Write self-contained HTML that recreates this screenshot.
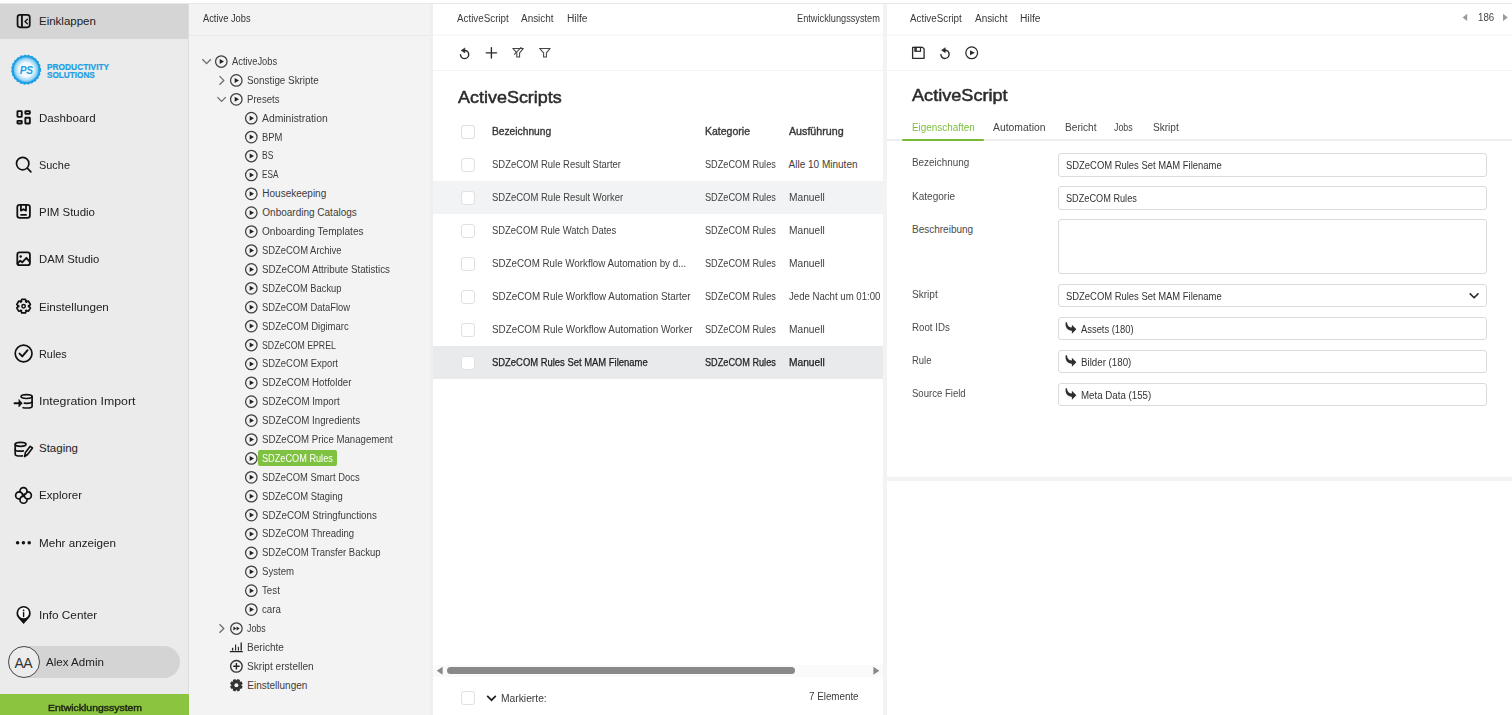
<!DOCTYPE html>
<html><head><meta charset="utf-8"><title>ActiveScripts</title>
<style>
html,body{margin:0;padding:0;width:1512px;height:715px;overflow:hidden;background:#fff;}
body{position:relative;font-family:"Liberation Sans", sans-serif;}
.t{position:absolute;white-space:nowrap;}
.b{position:absolute;}
.ov{position:absolute;left:0;top:0;}
</style></head><body>
<div class="b" style="left:0px;top:0px;width:1512px;height:3px;background:#fff"></div>
<div class="b" style="left:0px;top:3px;width:1512px;height:1px;background:#e8e8e8"></div>
<div class="b" style="left:0px;top:4px;width:189px;height:711px;background:#ebebeb"></div>
<div class="b" style="left:188px;top:4px;width:1px;height:711px;background:#dcdde0"></div>
<div class="b" style="left:0px;top:4px;width:188px;height:35px;background:#d5d5d5"></div>
<div class="b" style="left:189px;top:4px;width:244px;height:711px;background:#f3f3f3"></div>
<div class="b" style="left:430px;top:4px;width:3px;height:711px;background:#efefef"></div>
<div class="b" style="left:189px;top:35px;width:241px;height:1px;background:#e9eaec"></div>
<div class="b" style="left:433px;top:4px;width:450px;height:711px;background:#fff"></div>
<div class="b" style="left:433px;top:34px;width:450px;height:2px;background:#f8f9f9"></div>
<div class="b" style="left:433px;top:70px;width:450px;height:1px;background:#f3f4f6"></div>
<div class="b" style="left:883px;top:4px;width:4px;height:711px;background:#f3f3f3"></div>
<div class="b" style="left:887px;top:4px;width:625px;height:711px;background:#fff"></div>
<div class="b" style="left:887px;top:34px;width:625px;height:2px;background:#f8f9f9"></div>
<div class="b" style="left:887px;top:70px;width:625px;height:1px;background:#f3f4f6"></div>
<div class="b" style="left:887px;top:477px;width:625px;height:4px;background:#f2f2f2"></div>
<div class="t" style="left:39px;top:16px;font-size:11.5px;line-height:11.5px;color:#222;font-weight:400;">Einklappen</div>
<div class="t" style="left:46.5px;top:62px;font-size:10px;line-height:10px;color:#1e9fe3;font-weight:700;transform:translateY(0.2px) scale(0.835,0.94);transform-origin:0 8px;-webkit-text-stroke:0.25px #1e9fe3;">PRODUCTIVITY</div>
<div class="t" style="left:46.5px;top:70px;font-size:10px;line-height:10px;color:#1e9fe3;font-weight:700;transform:translateY(0.2px) scale(0.82,0.94);transform-origin:0 8px;-webkit-text-stroke:0.25px #1e9fe3;">SOLUTIONS</div>
<div class="t" style="left:39px;top:113px;font-size:11.5px;line-height:11.5px;color:#222;font-weight:400;transform:scale(1.0064,1.0);transform-origin:0 9px;">Dashboard</div>
<div class="t" style="left:39px;top:160px;font-size:11.5px;line-height:11.5px;color:#222;font-weight:400;transform:scale(0.9492,1.0);transform-origin:0 9px;">Suche</div>
<div class="t" style="left:39px;top:207px;font-size:11.5px;line-height:11.5px;color:#222;font-weight:400;transform:scale(0.9950,1.0);transform-origin:0 9px;">PIM Studio</div>
<div class="t" style="left:39px;top:254px;font-size:11.5px;line-height:11.5px;color:#222;font-weight:400;transform:scale(0.9845,1.0);transform-origin:0 9px;">DAM Studio</div>
<div class="t" style="left:39px;top:302px;font-size:11.5px;line-height:11.5px;color:#222;font-weight:400;transform:scale(1.0113,1.0);transform-origin:0 9px;">Einstellungen</div>
<div class="t" style="left:39px;top:349px;font-size:11.5px;line-height:11.5px;color:#222;font-weight:400;transform:scale(0.9453,1.0);transform-origin:0 9px;">Rules</div>
<div class="t" style="left:39px;top:396px;font-size:11.5px;line-height:11.5px;color:#222;font-weight:400;transform:scale(1.0704,1.0);transform-origin:0 9px;">Integration Import</div>
<div class="t" style="left:39px;top:443px;font-size:11.5px;line-height:11.5px;color:#222;font-weight:400;">Staging</div>
<div class="t" style="left:39px;top:490px;font-size:11.5px;line-height:11.5px;color:#222;font-weight:400;transform:scale(1.0047,1.0);transform-origin:0 9px;">Explorer</div>
<div class="t" style="left:39px;top:538px;font-size:11.5px;line-height:11.5px;color:#222;font-weight:400;transform:scale(1.0107,1.0);transform-origin:0 9px;">Mehr anzeigen</div>
<div class="t" style="left:39px;top:610px;font-size:11.5px;line-height:11.5px;color:#222;font-weight:400;transform:scale(1.0222,1.0);transform-origin:0 9px;">Info Center</div>
<div class="b" style="left:8px;top:646px;width:172px;height:32px;background:#d4d4d4;border-radius:16px"></div>
<div class="b" style="left:8px;top:646px;width:32px;height:32px;box-sizing:border-box;border:1px solid #4a4a4a;border-radius:50%;background:#ececec"></div>
<div class="t" style="left:7.3px;top:656px;font-size:14px;line-height:14px;color:#333;font-weight:400;width:32px;text-align:center;letter-spacing:-0.5px;">AA</div>
<div class="t" style="left:45.5px;top:657px;font-size:11.5px;line-height:11.5px;color:#222;font-weight:400;transform:scale(1.0068,1.0);transform-origin:0 9px;">Alex Admin</div>
<div class="b" style="left:0px;top:694px;width:189px;height:21px;background:#8bc540"></div>
<div class="t" style="left:47.5px;top:703px;font-size:9.5px;line-height:9.5px;color:#222a14;font-weight:400;-webkit-text-stroke:0.45px #222a14;transform:scale(1.0999,1.0);transform-origin:0 8px;">Entwicklungssystem</div>
<div class="t" style="left:203px;top:14px;font-size:10px;line-height:10px;color:#333;font-weight:400;transform:scale(0.9306,1.0);transform-origin:0 8px;">Active Jobs</div>
<div class="t" style="left:232.3px;top:57px;font-size:10px;line-height:10px;color:#3c3c3c;font-weight:400;transform:scale(0.9334,1.0);transform-origin:0 8px;">ActiveJobs</div>
<div class="t" style="left:247.3px;top:76px;font-size:10px;line-height:10px;color:#3c3c3c;font-weight:400;transform:scale(0.9854,1.0);transform-origin:0 8px;">Sonstige Skripte</div>
<div class="t" style="left:247.3px;top:95px;font-size:10px;line-height:10px;color:#3c3c3c;font-weight:400;transform:scale(0.9590,1.0);transform-origin:0 8px;">Presets</div>
<div class="t" style="left:262.3px;top:114px;font-size:10px;line-height:10px;color:#3c3c3c;font-weight:400;transform:scale(1.0367,1.0);transform-origin:0 8px;">Administration</div>
<div class="t" style="left:262.3px;top:133px;font-size:10px;line-height:10px;color:#3c3c3c;font-weight:400;transform:scale(0.9416,1.0);transform-origin:0 8px;">BPM</div>
<div class="t" style="left:262.3px;top:151px;font-size:10px;line-height:10px;color:#3c3c3c;font-weight:400;transform:scale(0.8489,1.0);transform-origin:0 8px;">BS</div>
<div class="t" style="left:262.3px;top:170px;font-size:10px;line-height:10px;color:#3c3c3c;font-weight:400;transform:scale(0.8228,1.0);transform-origin:0 8px;">ESA</div>
<div class="t" style="left:262.3px;top:189px;font-size:10px;line-height:10px;color:#3c3c3c;font-weight:400;">Housekeeping</div>
<div class="t" style="left:262.3px;top:208px;font-size:10px;line-height:10px;color:#3c3c3c;font-weight:400;">Onboarding Catalogs</div>
<div class="t" style="left:262.3px;top:227px;font-size:10px;line-height:10px;color:#3c3c3c;font-weight:400;transform:scale(1.0114,1.0);transform-origin:0 8px;">Onboarding Templates</div>
<div class="t" style="left:262.3px;top:246px;font-size:10px;line-height:10px;color:#3c3c3c;font-weight:400;transform:scale(0.9414,1.0);transform-origin:0 8px;">SDZeCOM Archive</div>
<div class="t" style="left:262.3px;top:265px;font-size:10px;line-height:10px;color:#3c3c3c;font-weight:400;transform:scale(0.9759,1.0);transform-origin:0 8px;">SDZeCOM Attribute Statistics</div>
<div class="t" style="left:262.3px;top:284px;font-size:10px;line-height:10px;color:#3c3c3c;font-weight:400;transform:scale(0.9350,1.0);transform-origin:0 8px;">SDZeCOM Backup</div>
<div class="t" style="left:262.3px;top:303px;font-size:10px;line-height:10px;color:#3c3c3c;font-weight:400;transform:scale(0.9373,1.0);transform-origin:0 8px;">SDZeCOM DataFlow</div>
<div class="t" style="left:262.3px;top:322px;font-size:10px;line-height:10px;color:#3c3c3c;font-weight:400;transform:scale(0.9523,1.0);transform-origin:0 8px;">SDZeCOM Digimarc</div>
<div class="t" style="left:262.3px;top:341px;font-size:10px;line-height:10px;color:#3c3c3c;font-weight:400;transform:scale(0.8748,1.0);transform-origin:0 8px;">SDZeCOM EPREL</div>
<div class="t" style="left:262.3px;top:359px;font-size:10px;line-height:10px;color:#3c3c3c;font-weight:400;transform:scale(0.9422,1.0);transform-origin:0 8px;">SDZeCOM Export</div>
<div class="t" style="left:262.3px;top:378px;font-size:10px;line-height:10px;color:#3c3c3c;font-weight:400;transform:scale(0.9690,1.0);transform-origin:0 8px;">SDZeCOM Hotfolder</div>
<div class="t" style="left:262.3px;top:397px;font-size:10px;line-height:10px;color:#3c3c3c;font-weight:400;transform:scale(0.9711,1.0);transform-origin:0 8px;">SDZeCOM Import</div>
<div class="t" style="left:262.3px;top:416px;font-size:10px;line-height:10px;color:#3c3c3c;font-weight:400;transform:scale(0.9693,1.0);transform-origin:0 8px;">SDZeCOM Ingredients</div>
<div class="t" style="left:262.3px;top:435px;font-size:10px;line-height:10px;color:#3c3c3c;font-weight:400;transform:scale(0.9638,1.0);transform-origin:0 8px;">SDZeCOM Price Management</div>
<div class="b" style="left:258px;top:450px;width:79px;height:16px;background:#7fc140;border-radius:2px"></div>
<div class="t" style="left:262.3px;top:454px;font-size:10px;line-height:10px;color:#fff;font-weight:400;transform:scale(0.9171,1.0);transform-origin:0 8px;">SDZeCOM Rules</div>
<div class="t" style="left:262.3px;top:473px;font-size:10px;line-height:10px;color:#3c3c3c;font-weight:400;transform:scale(0.9391,1.0);transform-origin:0 8px;">SDZeCOM Smart Docs</div>
<div class="t" style="left:262.3px;top:492px;font-size:10px;line-height:10px;color:#3c3c3c;font-weight:400;transform:scale(0.9419,1.0);transform-origin:0 8px;">SDZeCOM Staging</div>
<div class="t" style="left:262.3px;top:511px;font-size:10px;line-height:10px;color:#3c3c3c;font-weight:400;transform:scale(0.9740,1.0);transform-origin:0 8px;">SDZeCOM Stringfunctions</div>
<div class="t" style="left:262.3px;top:529px;font-size:10px;line-height:10px;color:#3c3c3c;font-weight:400;transform:scale(0.9545,1.0);transform-origin:0 8px;">SDZeCOM Threading</div>
<div class="t" style="left:262.3px;top:548px;font-size:10px;line-height:10px;color:#3c3c3c;font-weight:400;transform:scale(0.9523,1.0);transform-origin:0 8px;">SDZeCOM Transfer Backup</div>
<div class="t" style="left:262.3px;top:567px;font-size:10px;line-height:10px;color:#3c3c3c;font-weight:400;transform:scale(0.9620,1.0);transform-origin:0 8px;">System</div>
<div class="t" style="left:262.3px;top:586px;font-size:10px;line-height:10px;color:#3c3c3c;font-weight:400;transform:scale(0.9727,1.0);transform-origin:0 8px;">Test</div>
<div class="t" style="left:262.3px;top:605px;font-size:10px;line-height:10px;color:#3c3c3c;font-weight:400;transform:scale(0.9679,1.0);transform-origin:0 8px;">cara</div>
<div class="t" style="left:247.3px;top:624px;font-size:10px;line-height:10px;color:#3c3c3c;font-weight:400;transform:scale(0.8817,1.0);transform-origin:0 8px;">Jobs</div>
<div class="t" style="left:247.3px;top:643px;font-size:10px;line-height:10px;color:#3c3c3c;font-weight:400;transform:scale(1.0055,1.0);transform-origin:0 8px;">Berichte</div>
<div class="t" style="left:247.3px;top:662px;font-size:10px;line-height:10px;color:#3c3c3c;font-weight:400;transform:scale(1.0087,1.0);transform-origin:0 8px;">Skript erstellen</div>
<div class="t" style="left:247.3px;top:681px;font-size:10px;line-height:10px;color:#3c3c3c;font-weight:400;">Einstellungen</div>
<div class="t" style="left:456.9px;top:14px;font-size:10px;line-height:10px;color:#3a3a3a;font-weight:400;transform:scale(0.9808,1.0);transform-origin:0 8px;">ActiveScript</div>
<div class="t" style="left:521.3px;top:14px;font-size:10px;line-height:10px;color:#3a3a3a;font-weight:400;transform:scale(0.9938,1.0);transform-origin:0 8px;">Ansicht</div>
<div class="t" style="left:567px;top:14px;font-size:10px;line-height:10px;color:#3a3a3a;font-weight:400;transform:scale(1.0211,1.0);transform-origin:0 8px;">Hilfe</div>
<div class="t" style="left:796.6px;top:14px;font-size:10px;line-height:10px;color:#3a3a3a;font-weight:400;transform:scale(0.9210,1.0);transform-origin:0 8px;">Entwicklungssystem</div>
<div class="t" style="left:458.2px;top:89px;font-size:17px;line-height:17px;color:#2b2b2b;font-weight:400;-webkit-text-stroke:0.5px #2b2b2b;transform:scale(1.0563,1.0);transform-origin:0 14px;">ActiveScripts</div>
<div class="b" style="left:461px;top:125px;width:14px;height:14px;box-sizing:border-box;border:1px solid #dfe1e4;border-radius:3px;background:#fff"></div>
<div class="t" style="left:491.7px;top:127px;font-size:10px;line-height:10px;color:#383838;font-weight:400;-webkit-text-stroke:0.35px #383838;transform:scale(1.0227,1.0);transform-origin:0 8px;">Bezeichnung</div>
<div class="t" style="left:705.1px;top:127px;font-size:10px;line-height:10px;color:#383838;font-weight:400;-webkit-text-stroke:0.35px #383838;transform:scale(1.0511,1.0);transform-origin:0 8px;">Kategorie</div>
<div class="t" style="left:788.6px;top:127px;font-size:10px;line-height:10px;color:#383838;font-weight:400;-webkit-text-stroke:0.35px #383838;transform:scale(1.0675,1.0);transform-origin:0 8px;">Ausführung</div>
<div class="b" style="left:461px;top:158px;width:14px;height:14px;box-sizing:border-box;border:1px solid #dfe1e4;border-radius:3px;background:#fff"></div>
<div class="t" style="left:491.7px;top:160px;font-size:10px;line-height:10px;color:#404040;font-weight:400;transform:scale(0.9477,1.0);transform-origin:0 8px;">SDZeCOM Rule Result Starter</div>
<div class="t" style="left:705.1px;top:160px;font-size:10px;line-height:10px;color:#404040;font-weight:400;transform:scale(0.9171,1.0);transform-origin:0 8px;">SDZeCOM Rules</div>
<div class="t" style="left:788.6px;top:160px;font-size:10px;line-height:10px;color:#404040;font-weight:400;">Alle 10 Minuten</div>
<div class="b" style="left:433px;top:181px;width:450px;height:33px;background:#f2f3f4"></div>
<div class="b" style="left:461px;top:191px;width:14px;height:14px;box-sizing:border-box;border:1px solid #dfe1e4;border-radius:3px;background:#fff"></div>
<div class="t" style="left:491.7px;top:193px;font-size:10px;line-height:10px;color:#404040;font-weight:400;transform:scale(0.9486,1.0);transform-origin:0 8px;">SDZeCOM Rule Result Worker</div>
<div class="t" style="left:705.1px;top:193px;font-size:10px;line-height:10px;color:#404040;font-weight:400;transform:scale(0.9171,1.0);transform-origin:0 8px;">SDZeCOM Rules</div>
<div class="t" style="left:788.6px;top:193px;font-size:10px;line-height:10px;color:#404040;font-weight:400;transform:scale(1.0196,1.0);transform-origin:0 8px;">Manuell</div>
<div class="b" style="left:461px;top:224px;width:14px;height:14px;box-sizing:border-box;border:1px solid #dfe1e4;border-radius:3px;background:#fff"></div>
<div class="t" style="left:491.7px;top:226px;font-size:10px;line-height:10px;color:#404040;font-weight:400;transform:scale(0.9425,1.0);transform-origin:0 8px;">SDZeCOM Rule Watch Dates</div>
<div class="t" style="left:705.1px;top:226px;font-size:10px;line-height:10px;color:#404040;font-weight:400;transform:scale(0.9171,1.0);transform-origin:0 8px;">SDZeCOM Rules</div>
<div class="t" style="left:788.6px;top:226px;font-size:10px;line-height:10px;color:#404040;font-weight:400;transform:scale(1.0196,1.0);transform-origin:0 8px;">Manuell</div>
<div class="b" style="left:461px;top:257px;width:14px;height:14px;box-sizing:border-box;border:1px solid #dfe1e4;border-radius:3px;background:#fff"></div>
<div class="t" style="left:491.7px;top:259px;font-size:10px;line-height:10px;color:#404040;font-weight:400;transform:scale(0.9774,1.0);transform-origin:0 8px;">SDZeCOM Rule Workflow Automation by d...</div>
<div class="t" style="left:705.1px;top:259px;font-size:10px;line-height:10px;color:#404040;font-weight:400;transform:scale(0.9171,1.0);transform-origin:0 8px;">SDZeCOM Rules</div>
<div class="t" style="left:788.6px;top:259px;font-size:10px;line-height:10px;color:#404040;font-weight:400;transform:scale(1.0196,1.0);transform-origin:0 8px;">Manuell</div>
<div class="b" style="left:461px;top:290px;width:14px;height:14px;box-sizing:border-box;border:1px solid #dfe1e4;border-radius:3px;background:#fff"></div>
<div class="t" style="left:491.7px;top:292px;font-size:10px;line-height:10px;color:#404040;font-weight:400;transform:scale(0.9845,1.0);transform-origin:0 8px;">SDZeCOM Rule Workflow Automation Starter</div>
<div class="t" style="left:705.1px;top:292px;font-size:10px;line-height:10px;color:#404040;font-weight:400;transform:scale(0.9171,1.0);transform-origin:0 8px;">SDZeCOM Rules</div>
<div class="t" style="left:788.6px;top:292px;font-size:10px;line-height:10px;color:#404040;font-weight:400;transform:scale(0.9615,1.0);transform-origin:0 8px;">Jede Nacht um 01:00</div>
<div class="b" style="left:461px;top:323px;width:14px;height:14px;box-sizing:border-box;border:1px solid #dfe1e4;border-radius:3px;background:#fff"></div>
<div class="t" style="left:491.7px;top:325px;font-size:10px;line-height:10px;color:#404040;font-weight:400;transform:scale(0.9847,1.0);transform-origin:0 8px;">SDZeCOM Rule Workflow Automation Worker</div>
<div class="t" style="left:705.1px;top:325px;font-size:10px;line-height:10px;color:#404040;font-weight:400;transform:scale(0.9171,1.0);transform-origin:0 8px;">SDZeCOM Rules</div>
<div class="t" style="left:788.6px;top:325px;font-size:10px;line-height:10px;color:#404040;font-weight:400;transform:scale(1.0196,1.0);transform-origin:0 8px;">Manuell</div>
<div class="b" style="left:433px;top:346px;width:450px;height:33px;background:#e9eaec"></div>
<div class="b" style="left:461px;top:356px;width:14px;height:14px;box-sizing:border-box;border:1px solid #dfe1e4;border-radius:3px;background:#fff"></div>
<div class="t" style="left:491.7px;top:358px;font-size:10px;line-height:10px;color:#1e1e1e;font-weight:400;-webkit-text-stroke:0.25px #1e1e1e;transform:scale(0.9430,1.0);transform-origin:0 8px;">SDZeCOM Rules Set MAM Filename</div>
<div class="t" style="left:705.1px;top:358px;font-size:10px;line-height:10px;color:#1e1e1e;font-weight:400;-webkit-text-stroke:0.25px #1e1e1e;transform:scale(0.9171,1.0);transform-origin:0 8px;">SDZeCOM Rules</div>
<div class="t" style="left:788.6px;top:358px;font-size:10px;line-height:10px;color:#1e1e1e;font-weight:400;-webkit-text-stroke:0.25px #1e1e1e;transform:scale(1.0196,1.0);transform-origin:0 8px;">Manuell</div>
<div class="b" style="left:433px;top:665px;width:450px;height:12px;background:#fafafa"></div>
<div class="b" style="left:447px;top:667px;width:348px;height:7px;background:#898989;border-radius:3.5px"></div>
<div class="b" style="left:461px;top:691px;width:14px;height:14px;box-sizing:border-box;border:1px solid #dfe1e4;border-radius:3px;background:#fff"></div>
<div class="t" style="left:501px;top:694px;font-size:10px;line-height:10px;color:#3a3a3a;font-weight:400;transform:scale(1.0285,1.0);transform-origin:0 8px;">Markierte:</div>
<div class="t" style="left:809px;top:692px;font-size:10px;line-height:10px;color:#3a3a3a;font-weight:400;transform:scale(0.9799,1.0);transform-origin:0 8px;">7 Elemente</div>
<div class="t" style="left:910.3px;top:14px;font-size:10px;line-height:10px;color:#3a3a3a;font-weight:400;transform:scale(0.9808,1.0);transform-origin:0 8px;">ActiveScript</div>
<div class="t" style="left:974.9px;top:14px;font-size:10px;line-height:10px;color:#3a3a3a;font-weight:400;transform:scale(0.9938,1.0);transform-origin:0 8px;">Ansicht</div>
<div class="t" style="left:1020.4px;top:14px;font-size:10px;line-height:10px;color:#3a3a3a;font-weight:400;transform:scale(1.0211,1.0);transform-origin:0 8px;">Hilfe</div>
<div class="t" style="left:1478px;top:13px;font-size:10px;line-height:10px;color:#444;font-weight:400;transform:scale(0.9710,1.0);transform-origin:0 8px;">186</div>
<div class="t" style="left:911.9px;top:87px;font-size:17px;line-height:17px;color:#2b2b2b;font-weight:400;-webkit-text-stroke:0.5px #2b2b2b;transform:scale(1.0656,1.0);transform-origin:0 14px;">ActiveScript</div>
<div class="b" style="left:887px;top:139px;width:625px;height:2px;background:#eeeef0"></div>
<div class="b" style="left:902px;top:139px;width:82px;height:2px;background:#79b93a;border-radius:1px"></div>
<div class="t" style="left:911.9px;top:123px;font-size:10px;line-height:10px;color:#7cbd3d;font-weight:400;transform:scale(0.9882,1.0);transform-origin:0 8px;">Eigenschaften</div>
<div class="t" style="left:993.2px;top:123px;font-size:10px;line-height:10px;color:#444;font-weight:400;transform:scale(1.0374,1.0);transform-origin:0 8px;">Automation</div>
<div class="t" style="left:1064.6px;top:123px;font-size:10px;line-height:10px;color:#444;font-weight:400;transform:scale(1.0141,1.0);transform-origin:0 8px;">Bericht</div>
<div class="t" style="left:1114.2px;top:123px;font-size:10px;line-height:10px;color:#444;font-weight:400;transform:scale(0.8817,1.0);transform-origin:0 8px;">Jobs</div>
<div class="t" style="left:1152.5px;top:123px;font-size:10px;line-height:10px;color:#444;font-weight:400;transform:scale(1.0079,1.0);transform-origin:0 8px;">Skript</div>
<div class="t" style="left:912px;top:158px;font-size:10px;line-height:10px;color:#4a4a4a;font-weight:400;transform:scale(0.9897,1.0);transform-origin:0 8px;">Bezeichnung</div>
<div class="b" style="left:1058px;top:153px;width:429px;height:24px;box-sizing:border-box;border:1px solid #d9dbdf;border-radius:3px;background:#fff"></div>
<div class="t" style="left:912px;top:192px;font-size:10px;line-height:10px;color:#4a4a4a;font-weight:400;transform:scale(1.0055,1.0);transform-origin:0 8px;">Kategorie</div>
<div class="b" style="left:1058px;top:186px;width:429px;height:24px;box-sizing:border-box;border:1px solid #d9dbdf;border-radius:3px;background:#fff"></div>
<div class="t" style="left:912px;top:225px;font-size:10px;line-height:10px;color:#4a4a4a;font-weight:400;">Beschreibung</div>
<div class="b" style="left:1058px;top:219px;width:429px;height:55px;box-sizing:border-box;border:1px solid #d9dbdf;border-radius:3px;background:#fff"></div>
<div class="t" style="left:912px;top:290px;font-size:10px;line-height:10px;color:#4a4a4a;font-weight:400;transform:scale(1.0079,1.0);transform-origin:0 8px;">Skript</div>
<div class="b" style="left:1058px;top:284px;width:429px;height:23px;box-sizing:border-box;border:1px solid #d9dbdf;border-radius:3px;background:#fff"></div>
<div class="t" style="left:912px;top:323px;font-size:10px;line-height:10px;color:#4a4a4a;font-weight:400;transform:scale(0.9707,1.0);transform-origin:0 8px;">Root IDs</div>
<div class="b" style="left:1058px;top:317px;width:429px;height:23px;box-sizing:border-box;border:1px solid #d9dbdf;border-radius:3px;background:#fff"></div>
<div class="t" style="left:912px;top:356px;font-size:10px;line-height:10px;color:#4a4a4a;font-weight:400;transform:scale(0.9461,1.0);transform-origin:0 8px;">Rule</div>
<div class="b" style="left:1058px;top:350px;width:429px;height:23px;box-sizing:border-box;border:1px solid #d9dbdf;border-radius:3px;background:#fff"></div>
<div class="t" style="left:912px;top:389px;font-size:10px;line-height:10px;color:#4a4a4a;font-weight:400;transform:scale(0.9555,1.0);transform-origin:0 8px;">Source Field</div>
<div class="b" style="left:1058px;top:383px;width:429px;height:23px;box-sizing:border-box;border:1px solid #d9dbdf;border-radius:3px;background:#fff"></div>
<div class="t" style="left:1065.6px;top:161px;font-size:10px;line-height:10px;color:#333;font-weight:400;transform:scale(0.9430,1.0);transform-origin:0 8px;">SDZeCOM Rules Set MAM Filename</div>
<div class="t" style="left:1065.6px;top:194px;font-size:10px;line-height:10px;color:#333;font-weight:400;transform:scale(0.9171,1.0);transform-origin:0 8px;">SDZeCOM Rules</div>
<div class="t" style="left:1065.6px;top:292px;font-size:10px;line-height:10px;color:#333;font-weight:400;transform:scale(0.9430,1.0);transform-origin:0 8px;">SDZeCOM Rules Set MAM Filename</div>
<div class="t" style="left:1081.3px;top:325px;font-size:10px;line-height:10px;color:#333;font-weight:400;transform:scale(0.9377,1.0);transform-origin:0 8px;">Assets (180)</div>
<div class="t" style="left:1081.3px;top:358px;font-size:10px;line-height:10px;color:#333;font-weight:400;transform:scale(0.9737,1.0);transform-origin:0 8px;">Bilder (180)</div>
<div class="t" style="left:1081.3px;top:391px;font-size:10px;line-height:10px;color:#333;font-weight:400;transform:scale(0.9719,1.0);transform-origin:0 8px;">Meta Data (155)</div>
<svg class="ov" width="1512" height="715" viewBox="0 0 1512 715"><rect x="17.55" y="14.85" width="12.2" height="12.4" rx="2.4" fill="none" stroke="#111" stroke-width="1.75" stroke-linecap="round" stroke-linejoin="round"/><line x1="21.9" y1="14.9" x2="21.9" y2="27.2" stroke="#111" stroke-width="1.9"/><path d="M27.4 19.2 L25.0 21.45 L27.4 23.7" fill="none" stroke="#111" stroke-width="1.35" stroke-linecap="round" stroke-linejoin="round"/><defs><radialGradient id="lg" cx="50%" cy="50%" r="50%"><stop offset="0%" stop-color="#f4fafe"/><stop offset="50%" stop-color="#f1f9fe"/><stop offset="60%" stop-color="#cde9fa"/><stop offset="74%" stop-color="#a6d9f6"/><stop offset="84%" stop-color="#6cc2ef"/><stop offset="92%" stop-color="#2ba6e6"/><stop offset="100%" stop-color="#1e9fe3"/></radialGradient></defs><circle cx="26.1" cy="69.7" r="14.2" fill="url(#lg)"/><circle cx="26.1" cy="69.7" r="13.4" fill="none" stroke="#1e9fe3" stroke-width="1.6"/><circle cx="26.1" cy="69.7" r="14.3" fill="none" stroke="#1e9fe3" stroke-width="1.3" stroke-dasharray="2.2 1.6"/><text x="26.3" y="73.9" text-anchor="middle" font-family="Liberation Sans" font-style="italic" font-weight="700" font-size="10.2" fill="#1e9fe3" letter-spacing="-0.3">PS</text><g transform="translate(0 0.00)"><g fill="none" stroke="#111" stroke-width="1.9" stroke-linecap="round" stroke-linejoin="round"><rect x="17.45" y="111.15" width="4.3" height="5.7" rx="0.5"/><rect x="25.35" y="111.15" width="4.5" height="2.6" rx="0.5"/><rect x="17.45" y="120.85" width="4.3" height="2.7" rx="0.5"/><rect x="25.35" y="117.75" width="4.5" height="5.8" rx="0.5"/></g></g><circle cx="22.7" cy="163.6" r="6.2" fill="none" stroke="#111" stroke-width="1.7" stroke-linecap="round" stroke-linejoin="round"/><line x1="27.3" y1="168.2" x2="30.9" y2="171.8" fill="none" stroke="#111" stroke-width="1.7" stroke-linecap="round" stroke-linejoin="round"/><g fill="none" stroke="#111" stroke-width="1.8" stroke-linecap="round" stroke-linejoin="round"><rect x="17.3" y="204.9" width="12.6" height="13" rx="2.3"/><path d="M20.9 205 V210.6 L23.45 209.2 L26 210.6 V205"/><line x1="21" y1="214.8" x2="26.1" y2="214.8"/></g><g fill="none" stroke="#111" stroke-width="1.8" stroke-linecap="round" stroke-linejoin="round"><rect x="17.3" y="252.4" width="12.6" height="12.8" rx="2.3"/><path d="M17.5 263.6 L20.3 260.6 L22.2 262.3 L26.4 257.8 L29.8 261.8"/></g><circle cx="20.7" cy="256.4" r="1.25" fill="#111"/><path d="M20.69 302.13 L21.73 299.45 L25.47 299.45 L26.51 302.13 L25.67 301.65 L28.51 301.21 L30.38 304.44 L28.58 306.68 L28.58 305.72 L30.38 307.96 L28.51 311.19 L25.67 310.75 L26.51 310.27 L25.47 312.95 L21.73 312.95 L20.69 310.27 L21.53 310.75 L18.69 311.19 L16.82 307.96 L18.62 305.72 L18.62 306.68 L16.82 304.44 L18.69 301.21 L21.53 301.65 Z" fill="none" stroke="#111" stroke-width="1.7" stroke-linecap="round" stroke-linejoin="round"/><circle cx="23.6" cy="306.2" r="1.7" fill="none" stroke="#111" stroke-width="1.5" stroke-linecap="round" stroke-linejoin="round"/><circle cx="23.6" cy="353.5" r="8.4" fill="none" stroke="#111" stroke-width="1.7" stroke-linecap="round" stroke-linejoin="round"/><path d="M19.5 353.6 L22.3 356.4 L27.6 350.2" fill="none" stroke="#111" stroke-width="1.9" stroke-linecap="round" stroke-linejoin="round"/><g fill="none" stroke="#111" stroke-width="1.7" stroke-linecap="round" stroke-linejoin="round"><ellipse cx="26.6" cy="396.6" rx="5.5" ry="1.9"/><path d="M32.1 396.6 V406.2 C32.1 407.3 29.6 408 26.6 408 C25.2 408 24 407.9 23.2 407.7"/><path d="M32.1 401.6 C32.1 402.6 29.6 403.3 26.6 403.3 C25.8 403.3 25 403.3 24.4 403.2"/></g><line x1="14.6" y1="403.2" x2="19.5" y2="403.2" stroke="#111" stroke-width="2.1" stroke-linecap="round"/><path d="M18.9 399.5 L22.2 403.2 L18.9 406.9 Z" fill="#111" stroke="#111" stroke-width="0.6" stroke-linejoin="round"/><g fill="none" stroke="#111" stroke-width="1.7" stroke-linecap="round" stroke-linejoin="round"><ellipse cx="20.6" cy="444.3" rx="5.4" ry="2"/><path d="M15.2 444.3 V454.2 C15.2 455.3 17.6 456 20.6 456 C21.3 456 21.9 456 22.4 455.9"/><path d="M15.2 449.4 C15.2 450.5 17.6 451.2 20.6 451.2 C21.6 451.2 22.5 451.1 23.3 450.9"/></g><path d="M24.6 456.6 L25.3 452.8 L30.2 446.3 L32.5 448 L27.6 454.5 Z" fill="none" stroke="#111" stroke-width="1.6" stroke-linecap="round" stroke-linejoin="round"/><path d="M24.5 456.7 L25.2 453.4 L27.2 454.9 Z" fill="#111"/><defs><mask id="exm0" maskUnits="userSpaceOnUse" x="10" y="482" width="28" height="28"><rect x="10" y="482" width="28" height="28" fill="#fff"/><circle cx="23.5" cy="499.7" r="2.6999999999999997" fill="#000"/></mask><mask id="exm1" maskUnits="userSpaceOnUse" x="10" y="482" width="28" height="28"><rect x="10" y="482" width="28" height="28" fill="#fff"/><circle cx="27.8" cy="495.4" r="2.6999999999999997" fill="#000"/></mask><mask id="exm2" maskUnits="userSpaceOnUse" x="10" y="482" width="28" height="28"><rect x="10" y="482" width="28" height="28" fill="#fff"/><circle cx="23.5" cy="491.1" r="2.6999999999999997" fill="#000"/></mask><mask id="exm3" maskUnits="userSpaceOnUse" x="10" y="482" width="28" height="28"><rect x="10" y="482" width="28" height="28" fill="#fff"/><circle cx="19.2" cy="495.4" r="2.6999999999999997" fill="#000"/></mask></defs><circle cx="19.2" cy="495.4" r="3.55" fill="none" stroke="#111" stroke-width="1.7" mask="url(#exm0)"/><circle cx="23.5" cy="499.7" r="3.55" fill="none" stroke="#111" stroke-width="1.7" mask="url(#exm1)"/><circle cx="27.8" cy="495.4" r="3.55" fill="none" stroke="#111" stroke-width="1.7" mask="url(#exm2)"/><circle cx="23.5" cy="491.1" r="3.55" fill="none" stroke="#111" stroke-width="1.7" mask="url(#exm3)"/><circle cx="17.6" cy="542.7" r="1.75" fill="#111"/><circle cx="23.4" cy="542.7" r="1.75" fill="#111"/><circle cx="29.2" cy="542.7" r="1.75" fill="#111"/><path d="M23.6 623.9 L18.28 617.97 A7.15 7.15 0 1 1 28.92 617.97 Z" fill="#111"/><circle cx="23.6" cy="612.9" r="5.4" fill="#fff"/><circle cx="23.6" cy="610.4" r="0.85" fill="#111"/><line x1="23.6" y1="612.6" x2="23.6" y2="616.6" stroke="#111" stroke-width="1.4" stroke-linecap="round"/><path d="M202.40 59.30 L206.60 63.60 L210.80 59.30" fill="none" stroke="#6a6a6a" stroke-width="1.25"/><circle cx="221.3" cy="61.50" r="5.75" fill="none" stroke="#404040" stroke-width="1.25"/><path d="M219.70 59.00 L224.00 61.50 L219.70 64.00 Z" fill="#222"/><path d="M219.50 76.10 L223.80 80.40 L219.50 84.70" fill="none" stroke="#6a6a6a" stroke-width="1.25"/><circle cx="236.3" cy="80.40" r="5.75" fill="none" stroke="#404040" stroke-width="1.25"/><path d="M234.70 77.90 L239.00 80.40 L234.70 82.90 Z" fill="#222"/><path d="M217.40 97.10 L221.60 101.40 L225.80 97.10" fill="none" stroke="#6a6a6a" stroke-width="1.25"/><circle cx="236.3" cy="99.30" r="5.75" fill="none" stroke="#404040" stroke-width="1.25"/><path d="M234.70 96.80 L239.00 99.30 L234.70 101.80 Z" fill="#222"/><circle cx="251.3" cy="118.20" r="5.75" fill="none" stroke="#404040" stroke-width="1.25"/><path d="M249.70 115.70 L254.00 118.20 L249.70 120.70 Z" fill="#222"/><circle cx="251.3" cy="137.10" r="5.75" fill="none" stroke="#404040" stroke-width="1.25"/><path d="M249.70 134.60 L254.00 137.10 L249.70 139.60 Z" fill="#222"/><circle cx="251.3" cy="156.00" r="5.75" fill="none" stroke="#404040" stroke-width="1.25"/><path d="M249.70 153.50 L254.00 156.00 L249.70 158.50 Z" fill="#222"/><circle cx="251.3" cy="174.90" r="5.75" fill="none" stroke="#404040" stroke-width="1.25"/><path d="M249.70 172.40 L254.00 174.90 L249.70 177.40 Z" fill="#222"/><circle cx="251.3" cy="193.80" r="5.75" fill="none" stroke="#404040" stroke-width="1.25"/><path d="M249.70 191.30 L254.00 193.80 L249.70 196.30 Z" fill="#222"/><circle cx="251.3" cy="212.70" r="5.75" fill="none" stroke="#404040" stroke-width="1.25"/><path d="M249.70 210.20 L254.00 212.70 L249.70 215.20 Z" fill="#222"/><circle cx="251.3" cy="231.60" r="5.75" fill="none" stroke="#404040" stroke-width="1.25"/><path d="M249.70 229.10 L254.00 231.60 L249.70 234.10 Z" fill="#222"/><circle cx="251.3" cy="250.50" r="5.75" fill="none" stroke="#404040" stroke-width="1.25"/><path d="M249.70 248.00 L254.00 250.50 L249.70 253.00 Z" fill="#222"/><circle cx="251.3" cy="269.40" r="5.75" fill="none" stroke="#404040" stroke-width="1.25"/><path d="M249.70 266.90 L254.00 269.40 L249.70 271.90 Z" fill="#222"/><circle cx="251.3" cy="288.30" r="5.75" fill="none" stroke="#404040" stroke-width="1.25"/><path d="M249.70 285.80 L254.00 288.30 L249.70 290.80 Z" fill="#222"/><circle cx="251.3" cy="307.20" r="5.75" fill="none" stroke="#404040" stroke-width="1.25"/><path d="M249.70 304.70 L254.00 307.20 L249.70 309.70 Z" fill="#222"/><circle cx="251.3" cy="326.10" r="5.75" fill="none" stroke="#404040" stroke-width="1.25"/><path d="M249.70 323.60 L254.00 326.10 L249.70 328.60 Z" fill="#222"/><circle cx="251.3" cy="345.00" r="5.75" fill="none" stroke="#404040" stroke-width="1.25"/><path d="M249.70 342.50 L254.00 345.00 L249.70 347.50 Z" fill="#222"/><circle cx="251.3" cy="363.90" r="5.75" fill="none" stroke="#404040" stroke-width="1.25"/><path d="M249.70 361.40 L254.00 363.90 L249.70 366.40 Z" fill="#222"/><circle cx="251.3" cy="382.80" r="5.75" fill="none" stroke="#404040" stroke-width="1.25"/><path d="M249.70 380.30 L254.00 382.80 L249.70 385.30 Z" fill="#222"/><circle cx="251.3" cy="401.70" r="5.75" fill="none" stroke="#404040" stroke-width="1.25"/><path d="M249.70 399.20 L254.00 401.70 L249.70 404.20 Z" fill="#222"/><circle cx="251.3" cy="420.60" r="5.75" fill="none" stroke="#404040" stroke-width="1.25"/><path d="M249.70 418.10 L254.00 420.60 L249.70 423.10 Z" fill="#222"/><circle cx="251.3" cy="439.50" r="5.75" fill="none" stroke="#404040" stroke-width="1.25"/><path d="M249.70 437.00 L254.00 439.50 L249.70 442.00 Z" fill="#222"/><circle cx="251.3" cy="458.40" r="5.75" fill="none" stroke="#404040" stroke-width="1.25"/><path d="M249.70 455.90 L254.00 458.40 L249.70 460.90 Z" fill="#222"/><circle cx="251.3" cy="477.30" r="5.75" fill="none" stroke="#404040" stroke-width="1.25"/><path d="M249.70 474.80 L254.00 477.30 L249.70 479.80 Z" fill="#222"/><circle cx="251.3" cy="496.20" r="5.75" fill="none" stroke="#404040" stroke-width="1.25"/><path d="M249.70 493.70 L254.00 496.20 L249.70 498.70 Z" fill="#222"/><circle cx="251.3" cy="515.10" r="5.75" fill="none" stroke="#404040" stroke-width="1.25"/><path d="M249.70 512.60 L254.00 515.10 L249.70 517.60 Z" fill="#222"/><circle cx="251.3" cy="534.00" r="5.75" fill="none" stroke="#404040" stroke-width="1.25"/><path d="M249.70 531.50 L254.00 534.00 L249.70 536.50 Z" fill="#222"/><circle cx="251.3" cy="552.90" r="5.75" fill="none" stroke="#404040" stroke-width="1.25"/><path d="M249.70 550.40 L254.00 552.90 L249.70 555.40 Z" fill="#222"/><circle cx="251.3" cy="571.80" r="5.75" fill="none" stroke="#404040" stroke-width="1.25"/><path d="M249.70 569.30 L254.00 571.80 L249.70 574.30 Z" fill="#222"/><circle cx="251.3" cy="590.70" r="5.75" fill="none" stroke="#404040" stroke-width="1.25"/><path d="M249.70 588.20 L254.00 590.70 L249.70 593.20 Z" fill="#222"/><circle cx="251.3" cy="609.60" r="5.75" fill="none" stroke="#404040" stroke-width="1.25"/><path d="M249.70 607.10 L254.00 609.60 L249.70 612.10 Z" fill="#222"/><path d="M219.50 624.20 L223.80 628.50 L219.50 632.80" fill="none" stroke="#6a6a6a" stroke-width="1.25"/><circle cx="236.4" cy="628.50" r="5.75" fill="none" stroke="#404040" stroke-width="1.25"/><path d="M233.4 626.50 L236.4 628.50 L233.4 630.50 Z M236.6 626.50 L239.6 628.50 L236.6 630.50 Z" fill="#222"/><g stroke="#222" fill="none"><line x1="229.8" y1="651.6" x2="242.8" y2="651.6" stroke-width="1.3"/><line x1="232.6" y1="650.5" x2="232.6" y2="647.8" stroke-width="1.3"/><line x1="235.6" y1="650.5" x2="235.6" y2="644.6" stroke-width="1.1"/><line x1="238.4" y1="650.5" x2="238.4" y2="646.8" stroke-width="1.1"/><line x1="241.2" y1="650.5" x2="241.2" y2="642.6" stroke-width="1.3"/></g><circle cx="236.4" cy="666.30" r="5.8" fill="none" stroke="#333" stroke-width="1.35"/><path d="M236.4 663.10 V669.50 M233.2 666.30 H239.6" stroke="#222" stroke-width="1.4"/><path d="M241.00 685.07 L242.68 686.43 L241.71 688.78 L239.56 688.54 L239.74 688.36 L239.98 690.51 L237.63 691.48 L236.27 689.80 L236.53 689.80 L235.17 691.48 L232.82 690.51 L233.06 688.36 L233.24 688.54 L231.09 688.78 L230.12 686.43 L231.80 685.07 L231.80 685.33 L230.12 683.97 L231.09 681.62 L233.24 681.86 L233.06 682.04 L232.82 679.89 L235.17 678.92 L236.53 680.60 L236.27 680.60 L237.63 678.92 L239.98 679.89 L239.74 682.04 L239.56 681.86 L241.71 681.62 L242.68 683.97 L241.00 685.33 Z" fill="#333"/><circle cx="236.4" cy="685.20" r="2" fill="#f3f3f3"/><path d="M460.50 54.80 A4.1 4.1 0 1 0 464.60 50.40" fill="none" stroke="#2a2a2a" stroke-width="1.45" stroke-linecap="round"/><path d="M461.20 50.40 L464.90 47.90 L464.90 52.90 Z" fill="#2a2a2a" stroke="#2a2a2a" stroke-width="0.5" stroke-linejoin="round"/><path d="M491.4 47.6 V58 M486.2 52.8 H496.6" stroke="#2a2a2a" stroke-width="1.35" stroke-linecap="round"/><path d="M512.8 48.4 H523.4 L519.6 52.8 V56.9 L516.8 56.9 V52.8 Z" fill="none" stroke="#444" stroke-width="1.05" stroke-linejoin="round"/><line x1="514.2" y1="54.6" x2="521.4" y2="47.2" stroke="#444" stroke-width="1.05"/><path d="M539.6 48.4 H550.2 L546.4 52.8 V56.9 L543.6 56.9 V52.8 Z" fill="none" stroke="#444" stroke-width="1.05" stroke-linejoin="round"/><path d="M442.6 666.8 V674.8 L436.8 670.8 Z" fill="#888"/><path d="M873.4 666.8 V674.8 L879.4 670.8 Z" fill="#888"/><path d="M487.2 695.8 L491.5 700.2 L495.8 695.8" fill="none" stroke="#222" stroke-width="1.7"/><path d="M1467.2 13.8 V21 L1462.6 17.4 Z" fill="#9a9a9a"/><path d="M1503 13.8 V21 L1507.8 17.4 Z" fill="#9a9a9a"/><path d="M912.6 47.4 H922.6 L924.1 48.9 V58.3 H912.6 Z" fill="none" stroke="#2a2a2a" stroke-width="1.3" stroke-linejoin="round"/><rect x="914.9" y="47.4" width="5.6" height="3.9" fill="none" stroke="#2a2a2a" stroke-width="1.2"/><rect x="915.2" y="47.6" width="1.6" height="3.5" fill="#2a2a2a"/><path d="M940.90 54.60 A4.1 4.1 0 1 0 945.00 50.20" fill="none" stroke="#2a2a2a" stroke-width="1.45" stroke-linecap="round"/><path d="M941.60 50.20 L945.30 47.70 L945.30 52.70 Z" fill="#2a2a2a" stroke="#2a2a2a" stroke-width="0.5" stroke-linejoin="round"/><circle cx="971.7" cy="52.8" r="5.9" fill="none" stroke="#2a2a2a" stroke-width="1.25"/><path d="M970 50.3 L974.9 52.8 L970 55.3 Z" fill="#2a2a2a"/><path d="M1470.2 293.9 L1474.1 297.8 L1478 293.9" fill="none" stroke="#2a2a2a" stroke-width="1.6" stroke-linecap="round" stroke-linejoin="round"/><path d="M1065.70 322.30 C1064.90 326.20 1066.60 330.60 1072.40 331.00 L1072.40 327.60 C1069.00 327.60 1067.20 325.60 1066.90 322.30 Z" fill="#2e2e2e"/><path d="M1071.90 324.80 L1076.40 329.30 L1071.90 333.70 Z" fill="#2e2e2e"/><path d="M1065.70 355.30 C1064.90 359.20 1066.60 363.60 1072.40 364.00 L1072.40 360.60 C1069.00 360.60 1067.20 358.60 1066.90 355.30 Z" fill="#2e2e2e"/><path d="M1071.90 357.80 L1076.40 362.30 L1071.90 366.70 Z" fill="#2e2e2e"/><path d="M1065.70 388.30 C1064.90 392.20 1066.60 396.60 1072.40 397.00 L1072.40 393.60 C1069.00 393.60 1067.20 391.60 1066.90 388.30 Z" fill="#2e2e2e"/><path d="M1071.90 390.80 L1076.40 395.30 L1071.90 399.70 Z" fill="#2e2e2e"/></svg>
</body></html>
